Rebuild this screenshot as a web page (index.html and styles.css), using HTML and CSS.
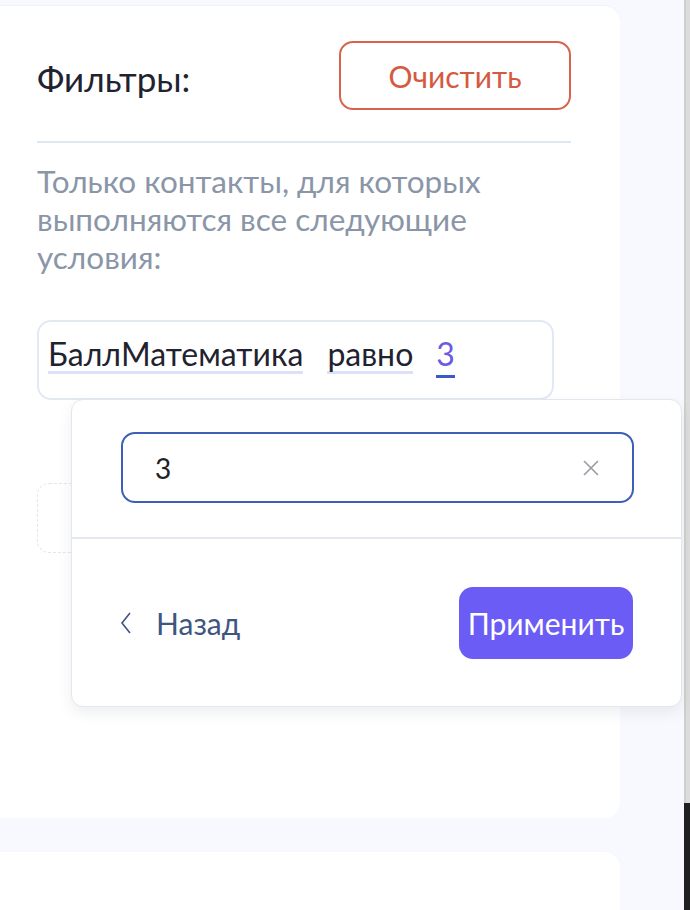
FILE: index.html
```html
<!DOCTYPE html>
<html lang="ru">
<head>
<meta charset="utf-8">
<link rel="stylesheet" href="styles.css">
</head>
<body>
<div class="page">
  <div class="main">
    <section class="card">
      <div class="head">
        <h2 class="title">Фильтры:</h2>
        <button class="btn-clear">Очистить</button>
      </div>
      <div class="divider"></div>
      <p class="hint">Только контакты, для которых выполняются все следующие условия:</p>
      <div class="cond">
        <span class="tok tok-field">БаллМатематика</span>
        <span class="tok tok-op">равно</span>
        <span class="tok tok-val">3</span>
      </div>
      <div class="add-box"></div>

      <div class="popup">
        <div class="popup-top">
          <div class="input">
            <span class="input-val">3</span>
            <svg class="clear-x" width="16" height="16" viewBox="0 0 16 16"><path d="M1 1L15 15M15 1L1 15" stroke="#9a9ca3" stroke-width="1.6" fill="none"/></svg>
          </div>
        </div>
        <div class="popup-foot">
          <button class="back">
            <svg width="12" height="22" viewBox="0 0 12 22"><path d="M10 1L2 11L10 21" stroke="#3e5680" stroke-width="1.6" fill="none"/></svg>
            <span>Назад</span>
          </button>
          <button class="apply">Применить</button>
        </div>
      </div>
    </section>
    <section class="card card2"></section>
  </div>
  <div class="scrollbar">
    <div class="sb-track"></div>
    <div class="sb-dark"></div>
  </div>
</div>
</body>
</html>
```

FILE: styles.css
```css
* { box-sizing: border-box; }
html, body { margin: 0; padding: 0; }
body {
  background: #f8f9fe;
  font-family: Lato, "Noto Sans", sans-serif;
  width: 690px;
  height: 910px;
  overflow: hidden;
}
.page {
  display: flex;
  height: 910px;
}
.main {
  flex: 1;
  padding-top: 5px;
  display: flex;
  flex-direction: column;
  gap: 34px;
}
.card {
  position: relative;
  flex-shrink: 0;
  width: 620px;
  height: 813px;
  background: #ffffff;
  border-radius: 0 16px 16px 0;
  border-top: 1px solid #f0f2f8;
  padding: 35px 0 0 37px;
}
.card2 {
  height: 58px;
  border-radius: 0 16px 0 0;
  border-top: none;
  padding: 0;
}
.head {
  width: 534px;
  display: flex;
  justify-content: space-between;
  align-items: center;
}
.title {
  margin: 4px 0 0;
  font-weight: 400;
  font-size: 35px;
  line-height: 40px;
  color: #1f2330;
}
.btn-clear {
  width: 232px;
  height: 69px;
  border: 2px solid #d8634b;
  border-radius: 14px;
  background: #fff;
  color: #d45a40;
  font-family: inherit;
  font-size: 30px;
  padding: 0;
}
.divider {
  width: 534px;
  height: 2px;
  background: #dfe6f4;
  margin-top: 31px;
}
.hint {
  margin: 19px 0 0;
  width: 534px;
  font-size: 31.5px;
  line-height: 38px;
  color: #8a96a7;
}
.cond {
  margin-top: 44px;
  width: 517px;
  height: 80px;
  border: 2px solid #e3e8f5;
  border-radius: 14px;
  padding: 16px 0 0 9px;
  display: flex;
  align-items: flex-start;
  gap: 24px;
}
.tok {
  font-size: 32px;
  line-height: 32px;
  color: #1f2330;
  border-bottom: 3px solid #dde0f8;
  padding-bottom: 1px;
}
.tok-val {
  color: #6a5ce0;
  border-bottom: none;
  position: relative;
  margin-left: -1px;
}
.tok-val::after {
  content: "";
  position: absolute;
  left: 0;
  right: 0;
  bottom: -7px;
  height: 3px;
  background: #3b59c9;
}
.add-box {
  margin-top: 83px;
  width: 120px;
  height: 70px;
  border: 1px dashed #e4e6ee;
  border-radius: 12px;
}
.popup {
  position: absolute;
  left: 71px;
  top: 393px;
  width: 611px;
  height: 308px;
  background: #fff;
  border: 1px solid #e3e6ee;
  border-radius: 12px;
  box-shadow: 0 6px 14px rgba(40, 50, 80, 0.08);
  z-index: 2;
}
.popup-top {
  padding: 32px 0 34px 49px;
  border-bottom: 2px solid #e5e8f1;
}
.input {
  width: 513px;
  height: 71px;
  border: 2px solid #3d5fb8;
  border-radius: 14px;
  display: flex;
  align-items: center;
  justify-content: space-between;
  padding: 0 33px 0 32px;
}
.input-val {
  font-size: 28px;
  color: #222;
}
.popup-foot {
  display: flex;
  justify-content: space-between;
  align-items: center;
  padding: 48px 48px 0 48px;
}
.back {
  display: flex;
  align-items: center;
  gap: 24px;
  background: none;
  border: none;
  padding: 0;
  font-family: inherit;
  font-size: 30px;
  color: #3e5680;
}
.apply {
  width: 174px;
  height: 72px;
  border: none;
  border-radius: 14px;
  background: #6b5cf6;
  color: #fff;
  font-family: inherit;
  font-size: 30px;
  padding: 0;
}
.scrollbar {
  width: 6px;
  display: flex;
  flex-direction: column;
}
.sb-track {
  height: 803px;
  background: #dcdcdc;
  border-left: 2px solid #cfcfcf;
}
.sb-dark {
  flex: 1;
  background: #1f2020;
}
```
